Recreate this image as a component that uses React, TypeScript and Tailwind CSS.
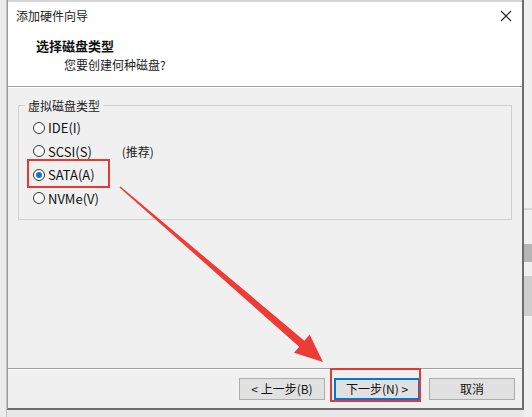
import React from "react";

const font = { fontFamily: '"Noto Sans CJK SC", "Noto Sans", sans-serif' };

function Radio({ label, checked }: { label: string; checked?: boolean }) {
  return (
    <div className="flex items-center h-[23.5px]">
      <span className="w-[12px] h-[12px] rounded-full border border-[#333] bg-white flex items-center justify-center">
        {checked && <span className="w-[6px] h-[6px] rounded-full bg-[#0078d7]" />}
      </span>
      <span className="ml-[3px] text-[13px] text-[#111]">{label}</span>
    </div>
  );
}

function Button({ children, focus }: { children: React.ReactNode; focus?: boolean }) {
  return (
    <div
      className={
        "w-[86px] h-[22px] flex items-center justify-center text-[12px] text-[#111] bg-[#e1e1e1] " +
        (focus ? "border-2 border-[#0078d7]" : "border border-[#adadad]")
      }
    >
      {children}
    </div>
  );
}

export default function App() {
  return (
    <div className="w-[532px] h-[417px] relative overflow-hidden bg-[#e9e9e9] flex" style={font}>
      {/* left edge of the screen behind */}
      <div className="w-[7px] h-full bg-[#ececec] border-r border-[#c4c4c4]" />

      {/* dialog */}
      <div className="w-[517px] h-[410px] flex flex-col border-r-2 border-b-2 border-[#6d6d6d] border-l border-l-[#9a9a9a] bg-[#f0f0f0]">
        {/* title bar */}
        <div className="h-[30px] bg-white border-t-2 border-[#d5d5d5] flex items-center justify-between pl-[8px] pr-[10px]">
          <span className="text-[12px] text-[#222]">添加硬件向导</span>
          <svg width="12" height="12" viewBox="0 0 12 12">
            <path d="M1 1 L11 11 M11 1 L1 11" stroke="#222" strokeWidth="1.2" />
          </svg>
        </div>

        {/* header */}
        <div className="h-[57px] bg-white border-b border-[#a0a0a0] pl-[28px] pt-[6px]">
          <div className="text-[13px] font-bold text-[#111] leading-[20px]">选择磁盘类型</div>
          <div className="text-[12px] text-[#222] leading-[18px] pl-[28px]">您要创建何种磁盘?</div>
        </div>
        <div className="h-px bg-white" />

        {/* body */}
        <div className="flex-1 px-[10px] pt-[17px]">
          <div className="relative h-[115px] border border-[#d0d0d0] pt-[10px] pl-[14px]">
            <span className="absolute -top-[8px] left-[6px] px-[3px] bg-[#f0f0f0] text-[12px] text-[#222] leading-[16px]">
              虚拟磁盘类型
            </span>
            <Radio label="IDE(I)" />
            <div className="flex">
              <Radio label="SCSI(S)" />
              <span className="ml-[30px] text-[12px] text-[#222] leading-[23.5px]">(推荐)</span>
            </div>
            <div className="relative">
              <Radio label="SATA(A)" checked />
              <div className="absolute -left-[6px] -top-[4px] w-[83px] h-[29px] border-2 border-[#e53935]" />
            </div>
            <Radio label="NVMe(V)" />
          </div>
        </div>

        {/* footer */}
        <div className="border-t border-[#a0a0a0]">
          <div className="h-px bg-white" />
          <div className="h-[38px] flex items-start justify-end gap-[9px] pr-[7px] pt-[8px]">
            <Button>&lt; 上一步(B)</Button>
            <div className="relative">
              <Button focus>下一步(N) &gt;</Button>
              <div className="absolute -left-[4px] -top-[10px] w-[91px] h-[34px] border-2 border-[#e53935]" />
            </div>
            <Button>取消</Button>
          </div>
        </div>
      </div>

      {/* window behind on the right */}
      <div className="flex-1 h-full bg-[#f0f0f0] flex flex-col">
        <div className="h-[208px]" />
        <div className="h-[2px] bg-[#d8d8d8]" />
        <div className="h-[34px]" />
        <div className="h-[18px] bg-[#b5b5b5]" />
        <div className="h-[14px]" />
        <div className="h-[40px] bg-[#cfcfcf]" />
      </div>

      {/* annotation arrow */}
      <svg className="absolute left-0 top-0 pointer-events-none" width="532" height="417">
        <polygon
          points="120.5,186.5 304.4,340.7 309.6,334.6 323,362 294,352.8 299.2,346.7 119.5,187.5"
          fill="#ee3b35"
        />
      </svg>
    </div>
  );
}
